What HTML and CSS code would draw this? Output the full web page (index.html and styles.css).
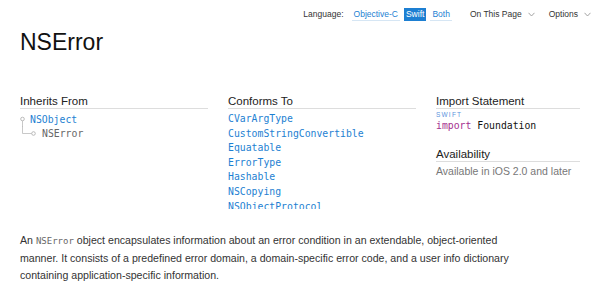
FILE: index.html
```html
<!DOCTYPE html>
<html lang="en">
<head>
    <meta charset="UTF-8">
    <title>NSError</title>
    <link rel="stylesheet" href="styles.css">
</head>
<body>

    <div class="topbar">
        <span class="lang-label">Language:</span>
        <a class="lang">Objective-C</a>
        <a class="lang active">Swift</a>
        <a class="lang">Both</a>
        <span class="menu">On This Page
            <svg width="7" height="5" viewBox="0 0 7 5"><path d="M0.5 0.8 L3.5 4 L6.5 0.8" fill="none" stroke="#999" stroke-width="0.9"/></svg>
        </span>
        <span class="menu">Options
            <svg width="7" height="5" viewBox="0 0 7 5"><path d="M0.5 0.8 L3.5 4 L6.5 0.8" fill="none" stroke="#999" stroke-width="0.9"/></svg>
        </span>
    </div>

    <div class="page">
        <h1>NSError</h1>

        <div class="summary">
            <div class="col">
                <h3>Inherits From</h3>
                <div class="tree">
                    <div class="tree-row">
                        <svg width="10" height="15" viewBox="0 0 10 15"><circle cx="2.5" cy="7" r="1.8" fill="none" stroke="#aaa" stroke-width="0.8"/><path d="M2.5 8.8 V15" stroke="#bbb" stroke-width="0.8"/></svg>
                        <a class="code">NSObject</a>
                    </div>
                    <div class="tree-row">
                        <svg width="22" height="15" viewBox="0 0 22 15"><path d="M2.5 0 V7.5 H11.5" fill="none" stroke="#bbb" stroke-width="0.8"/><circle cx="13.5" cy="7.5" r="1.8" fill="none" stroke="#aaa" stroke-width="0.8"/></svg>
                        <span class="code current">NSError</span>
                    </div>
                </div>
            </div>

            <div class="col">
                <h3>Conforms To</h3>
                <ul class="conforms">
                    <li><a class="code">CVarArgType</a></li>
                    <li><a class="code">CustomStringConvertible</a></li>
                    <li><a class="code">Equatable</a></li>
                    <li><a class="code">ErrorType</a></li>
                    <li><a class="code">Hashable</a></li>
                    <li><a class="code">NSCopying</a></li>
                    <li><a class="code">NSObjectProtocol</a></li>
                    <li><a class="code">NSSecureCoding</a></li>
                </ul>
            </div>

            <div class="col">
                <h3>Import Statement</h3>
                <div class="lang-tag">SWIFT</div>
                <div class="code import"><span class="keyword">import</span> Foundation</div>

                <h3 class="avail-head">Availability</h3>
                <p class="avail">Available in iOS 2.0 and later</p>
            </div>
        </div>

        <p class="intro">An <span class="code current">NSError</span> object encapsulates information about an error condition in an extendable, object-oriented manner. It consists of a predefined error domain, a domain-specific error code, and a user info dictionary containing application-specific information.</p>
    </div>

</body>
</html>
```

FILE: styles.css
```css
body {
    margin: 0;
    font-family: "Liberation Sans", Arial, sans-serif;
    color: #333;
    background: white;
}
.topbar {
    display: flex;
    justify-content: flex-end;
    align-items: center;
    height: 28px;
    padding-right: 9px;
    font-size: 8.5px;
    color: #333;
}
.lang-label {
    margin-right: 8px;
}
.lang {
    color: #1d7fd2;
    padding: 1px 2px;
    margin-right: 4px;
    border-bottom: 1px solid #d6e6f4;
}
.lang.active {
    background-color: #1d7fd2;
    color: white;
    border-bottom-color: #1d7fd2;
}
.menu {
    display: flex;
    align-items: center;
    gap: 6px;
    margin-left: 14px;
}
.page {
    padding: 0 20px;
}
h1 {
    margin: 0;
    font-size: 23px;
    line-height: 28px;
    font-weight: normal;
    color: #111;
}
.summary {
    display: grid;
    grid-template-columns: 188px 188px 1fr;
    column-gap: 20px;
    margin-top: 38px;
}
h3 {
    margin: 0;
    font-size: 11.5px;
    line-height: 14px;
    font-weight: normal;
    color: #222;
    border-bottom: 1px solid #ddd;
}
.code {
    font-family: "DejaVu Sans Mono", "Liberation Mono", monospace;
    font-size: 9.8px;
}
a.code {
    color: #1d7fd2;
}
.current {
    color: #666;
}
.tree {
    padding-top: 3px;
    font-family: "DejaVu Sans Mono", "Liberation Mono", monospace;
    font-size: 9.8px;
}
.tree-row {
    display: flex;
    align-items: center;
    height: 14.6px;
}
.tree-row svg {
    flex-shrink: 0;
}
.conforms {
    list-style: none;
    margin: 0;
    padding: 3px 0 0;
    max-height: 97px;
    overflow: hidden;
    font-family: "DejaVu Sans Mono", "Liberation Mono", monospace;
    font-size: 9.8px;
}
.conforms li {
    line-height: 14.6px;
}
.lang-tag {
    margin-top: 2px;
    font-size: 6.5px;
    letter-spacing: 1.2px;
    color: #5b93dc;
    line-height: 8px;
}
.import {
    color: #111;
    line-height: 14px;
}
.keyword {
    color: #a5308f;
}
.avail-head {
    margin-top: 14px;
}
.avail {
    margin: 2px 0 0;
    font-size: 10.5px;
    line-height: 14px;
    color: #777;
}
.intro {
    margin: 23px 0 0;
    max-width: 500px;
    font-size: 10.6px;
    line-height: 17px;
    color: #333;
}
.intro .code {
    font-size: 9px;
}
```
